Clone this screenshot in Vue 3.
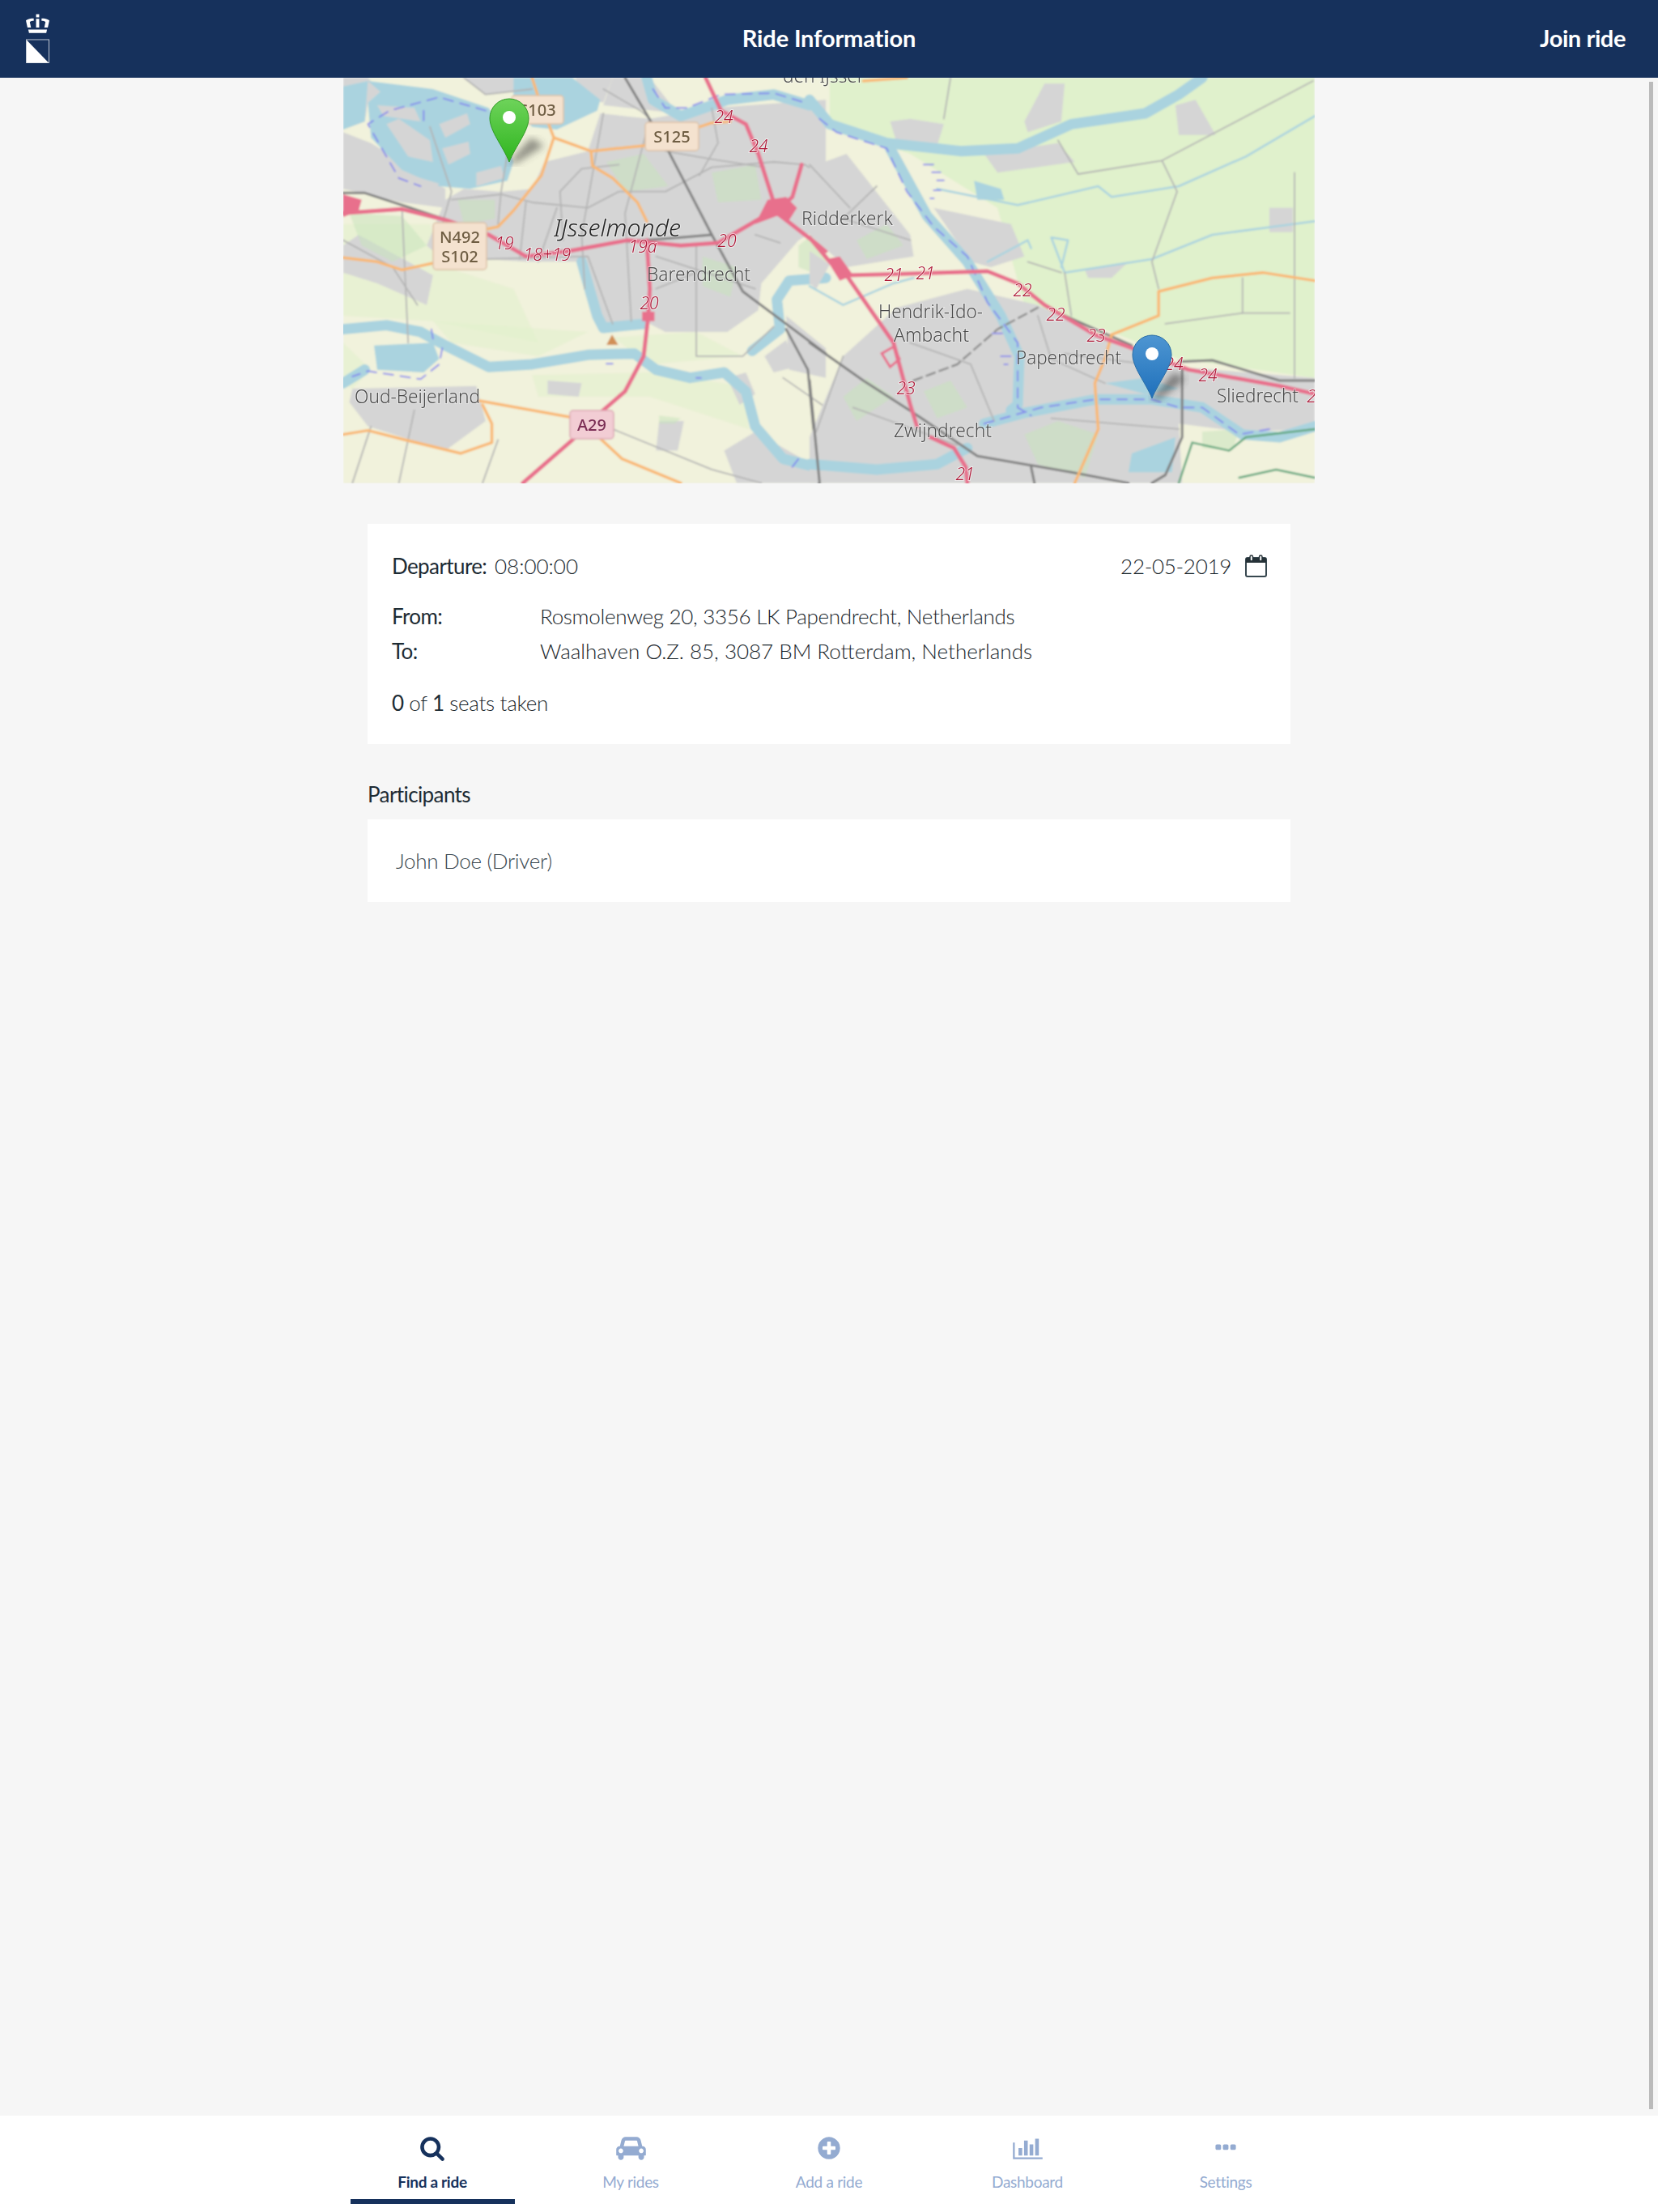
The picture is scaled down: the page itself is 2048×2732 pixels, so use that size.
<template>
  <div class="page">
    <header class="topbar">
      <svg class="logo" viewBox="0 0 30 63" aria-label="logo">
        <rect x="13" y="0" width="4" height="4" fill="#fff" />
        <path d="M13 6h4v11h-4zM0 8c3-2 6-2.500 10-2.500v3C8 8.500 6 9 5 10l1.500 7H2zM30 8c-3-2-6-2.500-10-2.500v3c2 0 4 .5 5 1.500l-1.500 7H28zM3 19.500h24l-1 4.500H4z" fill="#fff" />
        <rect x="0.500" y="32.500" width="29" height="29.500" fill="#16315c" stroke="#fff" stroke-opacity=".75" />
        <path d="M1 33l28 29H1z" fill="#fff" />
      </svg>
      <h1 class="title">Ride Information</h1>
      <a class="join">Join ride</a>
    </header>

    <main class="content">
      <svg class="map" viewBox="0 0 1200 501" xmlns="http://www.w3.org/2000/svg">
        <defs>
          <filter id="soft"><feGaussianBlur stdDeviation="0.8" /></filter>
          <filter id="softText"><feGaussianBlur stdDeviation="0.35" /></filter>
          <filter id="softer"><feGaussianBlur stdDeviation="5" /></filter>
          <linearGradient id="pinGreen" x1="0" y1="0" x2="0" y2="1">
            <stop offset="0" stop-color="#6ed35a" />
            <stop offset="1" stop-color="#2fb51f" />
          </linearGradient>
          <linearGradient id="pinBlue" x1="0" y1="0" x2="0" y2="1">
            <stop offset="0" stop-color="#4e96d2" />
            <stop offset="1" stop-color="#1f70bb" />
          </linearGradient>
        </defs>

        <g filter="url(#soft)">
          <rect width="1200" height="501" fill="#f1f2dc" />
          <g transform="translate(576,-6) scale(.4146,.3333)">
            <path class="meadow" d="M60 18H1505V1130L1100 1060 900 960 640 860 560 500 300 300 60 200z" />
          </g>
          <g transform="translate(-4,-6) scale(.3827,.3333)">
            <path v-for="(d, i) in leftGreens" :key="'lg' + i" class="meadow soft-green" :d="d" />
            <path v-for="(d, i) in leftUrban" :key="'lu' + i" class="urban" :d="d" />
            <path v-for="(d, i) in leftParks" :key="'lp' + i" class="park" :d="d" />
            <path v-for="(d, i) in leftWaterAreas" :key="'lwa' + i" class="water-area" :d="d" />
            <path v-for="(d, i) in leftPiers" :key="'lpi' + i" class="urban" :d="d" />
            <path v-for="(d, i) in leftRivers" :key="'lr' + i" class="river" :d="d" />
            <path v-for="(d, i) in leftMinor" :key="'lm' + i" class="minor" :d="d" />
            <path v-for="(d, i) in leftBoat" :key="'lb' + i" class="boat" :d="d" />
            <path v-for="(d, i) in leftRail" :key="'lra' + i" class="rail" :d="d" />
            <path v-for="(d, i) in leftTrunk" :key="'lt' + i" class="trunk" :d="d" />
            <path v-for="(d, i) in leftMotorway" :key="'lmw' + i" class="motorway" :d="d" />
            <path class="knot" d="M1380 470L1440 460 1475 500 1450 545 1410 530 1340 560z" />
            <path class="knot" d="M10 450L70 470 60 510 10 535z" />
            <path class="knot" d="M975 885H1015V920H975z" />
            <path d="M878 970L860 1008H898z" fill="#d18f56" />
          </g>
          <g transform="translate(576,-6) scale(.4146,.3333)">
            <path v-for="(d, i) in rightUrban" :key="'ru' + i" class="urban" :d="d" />
            <path v-for="(d, i) in rightParks" :key="'rp' + i" class="park" :d="d" />
            <path v-for="(d, i) in rightWaterAreas" :key="'rwa' + i" class="water-area" :d="d" />
            <path v-for="(d, i) in rightRivers" :key="'rr' + i" class="river" :d="d" />
            <path v-for="(d, i) in rightStreams" :key="'rs' + i" class="stream" :d="d" />
            <path v-for="(d, i) in rightMinor" :key="'rm' + i" class="minor" :d="d" />
            <path v-for="(d, i) in rightBoat" :key="'rb' + i" class="boat" :d="d" />
            <path v-for="(d, i) in rightForest" :key="'rf' + i" class="forest" :d="d" />
            <path v-for="(d, i) in rightRail" :key="'rra' + i" class="rail" :d="d" />
            <path class="tram" d="M310 1140L440 1080 560 950 680 870" />
            <path v-for="(d, i) in rightTrunk" :key="'rt' + i" class="trunk" :d="d" />
            <path v-for="(d, i) in rightMotorway" :key="'rmw' + i" class="motorway" :d="d" />
            <path class="knot" d="M50 690L90 680 130 750 90 770z" />
            <path class="knot-line" d="M215 1040L250 1015 268 1060 240 1090z" />
          </g>

          <g v-for="shield in shields" :key="shield.lines[0]">
            <rect :x="shield.x" :y="shield.y" :width="shield.w" :height="shield.h" rx="4" :class="shield.pink ? 'shield-pink' : 'shield'" />
          </g>
        </g>

        <g filter="url(#softText)">
          <g v-for="shield in shields" :key="'t' + shield.lines[0]">
            <text
              v-for="(line, i) in shield.lines"
              :key="line"
              :x="shield.x + shield.w / 2"
              :y="shield.y + 25 + i * 24"
              text-anchor="middle"
              :class="shield.pink ? 'shield-text-pink' : 'shield-text'"
            >{{ line }}</text>
          </g>
          <text
            v-for="label in placeLabels"
            :key="label.text"
            :x="label.x"
            :y="label.y"
            :textLength="label.w"
            lengthAdjust="spacingAndGlyphs"
            class="place"
          >{{ label.text }}</text>
          <text x="260" y="196" textLength="157" lengthAdjust="spacingAndGlyphs" class="town">IJsselmonde</text>
          <text
            v-for="(ref, i) in roadRefs"
            :key="'ref' + i"
            :x="ref.x"
            :y="ref.y"
            text-anchor="middle"
            class="road-ref"
          >{{ ref.t }}</text>
        </g>

        <path d="M205 104L232 74 248 84 213 106z" fill="#333" opacity=".5" filter="url(#softer)" />
        <path d="M999 396L1026 364 1040 372 1007 398z" fill="#333" opacity=".55" filter="url(#softer)" />
        <path d="M205 104C197 84 181 66 181 50a24 24 0 0 1 48 0C229 66 213 84 205 104z" fill="url(#pinGreen)" stroke="#2f9a24" />
        <circle cx="205" cy="49" r="8" fill="#fff" />
        <path d="M999 396C991 376 975 358 975 342a24 24 0 0 1 48 0C1023 358 1007 376 999 396z" fill="url(#pinBlue)" stroke="#2a6ea6" />
        <circle cx="999" cy="341" r="8" fill="#fff" />
      </svg>

      <section class="details">
        <div class="top-row">
          <p class="departure"><strong>Departure:</strong> <span>08:00:00</span></p>
          <p class="date">
            22-05-2019
            <svg class="calendar" viewBox="0 0 27 28">
              <rect x="1" y="4" width="25" height="23" rx="2" fill="none" stroke="#37474f" stroke-width="2" />
              <path d="M1 4h25v6H1z" fill="#263238" />
              <rect x="6" y="1" width="3.500" height="7" rx="1.700" fill="#fff" stroke="#263238" stroke-width="1.500" />
              <rect x="17.500" y="1" width="3.500" height="7" rx="1.700" fill="#fff" stroke="#263238" stroke-width="1.500" />
            </svg>
          </p>
        </div>
        <div class="route">
          <strong>From:</strong><span>Rosmolenweg 20, 3356 LK Papendrecht, Netherlands</span>
          <strong>To:</strong><span class="to-value">Waalhaven O.Z. 85, 3087 BM Rotterdam, Netherlands</span>
        </div>
        <p class="seats"><strong>0</strong> of <strong>1</strong> seats taken</p>
      </section>

      <h2 class="participants-title">Participants</h2>
      <section class="participants">John Doe (Driver)</section>
    </main>

    <nav class="tabs">
      <a v-for="tab in tabs" :key="tab.label" class="tab" :class="{ active: tab.active }">
        <svg class="tab-icon" :style="{ width: tab.size + 'px' }" :viewBox="tab.box"><path :d="tab.icon" /></svg>
        <span>{{ tab.label }}</span>
      </a>
    </nav>

    <div class="scrollbar"></div>
  </div>
</template>

<script setup>
const tabs = [
  {
    label: "Find a ride",
    active: true,
    size: 32,
    box: "0 0 1792 1792",
    icon: "M1216 832q0-185-131.500-316.500t-316.500-131.500-316.500 131.500-131.500 316.500 131.500 316.500 316.500 131.500 316.500-131.500 131.500-316.500zm512 832q0 52-38 90t-90 38q-54 0-90-38l-343-342q-179 124-399 124-143 0-273.500-55.500t-225-150-150-225-55.500-273.500 55.500-273.500 150-225 225-150 273.500-55.500 273.500 55.500 225 150 150 225 55.500 273.500q0 220-124 399l343 343q37 37 37 90z",
  },
  {
    label: "My rides",
    size: 37,
    box: "0 0 2048 1792",
    icon: "M480 1088q0-66-47-113t-113-47-113 47-47 113 47 113 113 47 113-47 47-113zm36-320h1016l-89-357q-2-8-14-17.500t-21-9.500h-768q-9 0-21 9.500t-14 17.500zm1372 320q0-66-47-113t-113-47-113 47-47 113 47 113 113 47 113-47 47-113zm160-96v384q0 14-9 23t-23 9h-96v128q0 80-56 136t-136 56-136-56-56-136v-128h-1024v128q0 80-56 136t-136 56-136-56-56-136v-128h-96q-14 0-23-9t-9-23v-384q0-93 65.500-158.500t158.500-65.500h28l105-419q23-94 104-157.500t179-63.500h768q98 0 179 63.500t104 157.500l105 419h28q93 0 158.500 65.500t65.500 158.500z",
  },
  {
    label: "Add a ride",
    size: 32,
    box: "0 0 1792 1792",
    icon: "M1344 960v-128q0-26-19-45t-45-19h-256v-256q0-26-19-45t-45-19h-128q-26 0-45 19t-19 45v256h-256q-26 0-45 19t-19 45v128q0 26 19 45t45 19h256v256q0 26 19 45t45 19h128q26 0 45-19t19-45v-256h256q26 0 45-19t19-45zm320-64q0 209-103 385.500t-279.500 279.500-385.500 103-385.500-103-279.500-279.500-103-385.500 103-385.500 279.500-279.500 385.500-103 385.500 103 279.500 279.500 103 385.500z",
  },
  {
    label: "Dashboard",
    size: 37,
    box: "0 0 2048 1792",
    icon: "M640 896v512h-256v-512h256zm384-512v1024h-256v-1024h256zm1024 1152v128h-2048v-1152h128v1024h1920zm-640-896v768h-256v-768h256zm384-384v1152h-256v-1152h256z",
  },
  {
    label: "Settings",
    size: 32,
    box: "0 0 1792 1792",
    icon: "M576 736v192q0 40-28 68t-68 28h-192q-40 0-68-28t-28-68v-192q0-40 28-68t68-28h192q40 0 68 28t28 68zm512 0v192q0 40-28 68t-68 28h-192q-40 0-68-28t-28-68v-192q0-40 28-68t68-28h192q40 0 68 28t28 68zm512 0v192q0 40-28 68t-68 28h-192q-40 0-68-28t-28-68v-192q0-40 28-68t68-28h192q40 0 68 28t28 68z",
  },
];

// map features, written in the coordinates of the two halves of the map
const leftGreens = [
  "M10 560H290L340 720 560 800 640 1000 300 920 10 900z",
  "M300 920L800 960 640 1050 360 1000z",
  "M880 980L1150 960 1300 1050 1000 1080z",
  "M620 1120L1000 1110 1300 1160 1320 1320 1000 1200 640 1200z",
  "M10 1000L100 1100 40 1170 10 1150z",
];
const leftUrban = [
  "M340 470L400 430 520 440 620 430 660 330 800 290 840 150 1000 170 1200 130 1568 100V560L1480 620 1360 780 1350 880 1250 960 1050 960 1000 930 830 930 780 700 600 700 470 690 340 700 280 640z",
  "M10 18H90L130 70 90 110 80 180 10 210z",
  "M10 220L100 260 340 430 340 500 200 480 10 430z",
  "M10 640L60 600 300 750 280 860 120 780 10 740z",
  "M40 1170L440 1160 470 1290 340 1400 90 1310 30 1220z",
  "M1240 1400L1340 1330 1568 1480V1520H1280z",
  "M1030 1290L1110 1290 1090 1400 1020 1400z",
  "M670 1140L780 1150 770 1200 670 1190z",
  "M400 18H600L560 70 470 80z",
  "M880 18H1000L1090 150 850 120z",
  "M1250 1130L1310 1110 1340 1190 1290 1230z",
  "M1440 900L1568 1020V1130L1450 1100z",
  "M1370 1050L1440 990 1470 1090 1400 1110z",
  "M760 18H880L850 110 780 90z",
];
const leftParks = [
  "M1200 370L1340 340 1360 470 1220 480z",
  "M860 330L980 300 1060 420 920 440z",
  "M30 520L200 530 280 640 170 700 70 640z",
  "M1170 680L1280 720 1260 830 1170 790z",
  "M380 470L500 470 500 540 400 560z",
  "M1480 640L1568 560V760L1480 720z",
  "M1030 1270L1100 1280 1080 1300 1030 1300z",
];
const leftWaterAreas = [
  "M90 30L300 60 480 130 520 200 560 330 540 400 420 430 320 420 200 360 100 240 90 110 130 70z",
  "M10 50L90 30 80 180 10 210z",
  "M560 18H750L840 100 830 140 700 210 620 200 560 120z",
  "M110 1010L300 1000 320 1060 270 1110 120 1100z",
];
const leftPiers = [
  "M150 190L190 170 290 250 300 330 220 310z",
  "M320 190L410 150 420 190 340 240z",
  "M330 280L415 255 420 300 350 340z",
  "M200 370L320 410 310 425 200 395z",
  "M440 370L520 345 530 390 440 420z",
  "M40 400L160 385 300 420 200 440z",
  "M120 120L240 130 260 180 140 160z",
];
const leftRivers = [
  "M10 950L150 935 260 960 340 1010 480 1090 620 1080 800 1045 950 1040 1020 1100 1130 1130 1240 1110 1310 1180 1340 1310 1430 1430 1568 1470",
  "M990 18L1010 100 1100 160 1250 100 1400 80 1515 120",
  "M780 700L830 900 850 945 980 930",
  "M1568 760L1450 770 1410 840 1420 950 1330 1030",
  "M10 1150L80 1100",
];
const leftMinor = [
  "M360 470L520 450 620 480 800 500 900 440 1050 440 1200 350 1400 330 1500 340",
  "M720 620L710 440 780 355 900 340",
  "M1050 290L1200 320 1370 350",
  "M850 150L780 600 790 800",
  "M470 690L800 680 880 930",
  "M1150 640L1150 1050 1300 1050 1400 940",
  "M200 500L220 1000",
  "M540 300L520 440 510 560",
  "M290 200L360 440 330 560",
  "M880 1320L1200 1470 1360 1520",
  "M240 1250L190 1520",
  "M460 1520L510 1360",
  "M1000 170L920 520 940 920",
  "M1200 130L1220 260 1160 380",
  "M1500 340L1568 390",
  "M1020 680L1340 800M1020 800L1150 740",
  "M600 480L580 690M700 500L640 700",
  "M10 620L170 720 250 860",
  "M100 1310L40 1520M1430 1130L1568 1240",
  "M400 18L470 80 620 60M850 60L970 140 1000 170",
  "M1420 630L1340 600",
];
const leftBoat = [
  "M470 140L320 90 160 140 90 190 130 270 190 390 260 420",
  "M270 140V180M295 950L300 985M330 1020L320 1080 260 1135 90 1105 40 1125",
  "M1010 60L1050 130 1120 130 1230 80 1400 75 1500 110",
  "M860 1078H880M1150 1130H1165M1460 1460L1480 1430",
];
const leftRail = [
  "M920 18L1060 290 1200 600 1300 810 1568 1040",
  "M10 445L80 445 360 550",
  "M1440 950L1510 1100 1545 1520",
  "M930 625L1100 610 1200 600",
];
const leftTrunk = [
  "M620 18L640 90 690 240 810 290 980 270 1200 185 1260 180",
  "M690 240L650 380 560 510 510 570 470 580",
  "M810 290L815 345 880 390 960 480 990 550",
  "M10 685L120 700 200 730 300 705",
  "M450 1215L740 1275",
  "M460 1230L490 1300 490 1370 390 1410 210 1360 90 1325 10 1340",
  "M840 1355L910 1430 1100 1520",
];
const leftMotorway = [
  "M10 520L200 505 340 545 480 600 600 680 740 660 930 620 1100 640 1220 630 1400 510 1568 660",
  "M1180 18L1230 140 1310 190 1350 300 1400 480",
  "M1490 340L1460 460 1410 510",
  "M990 620L1000 800 995 900 980 1050 920 1180 840 1260 750 1360 590 1520",
];
const rightUrban = [
  "M0 350L110 300 300 600 310 680 110 720 0 600z",
  "M370 500L600 560 640 680 540 720 480 700z",
  "M640 180L700 40H760L750 180 650 220z",
  "M520 300L740 260 790 330 560 370z",
  "M100 1050L260 870 470 800 680 860 920 1010 1100 1090 1505 1130V1320L1290 1330 1100 1300 1110 1520H0V1350z",
  "M1370 500H1440V590H1370z",
  "M820 730L950 700 900 760 830 760z",
  "M1090 120L1150 100 1210 230 1100 230z",
  "M240 180L300 170 400 190 380 270 260 260z",
  "M0 660L60 710 20 800 0 780z",
];
const rightParks = [
  "M100 1200L170 1130 250 1200 140 1290z",
  "M640 1340L740 1290 860 1340 820 1500 680 1450z",
  "M1170 1330L1280 1320 1260 1400 1170 1390z",
  "M140 620L230 560 280 640 170 690z",
  "M340 1180L420 1140 470 1240 380 1280z",
];
const rightWaterAreas = [
  "M960 1410L1090 1350 1080 1480 950 1480z",
  "M490 400L570 430 580 470 500 470z",
  "M880 1150L1000 1130 1100 1170 1000 1190z",
];
const rightRivers = [
  "M0 100L60 190 230 260 450 290 620 280 780 190 1000 150 1100 80 1170 18",
  "M240 280L350 530 470 700 570 900 625 1050 620 1230 600 1250",
  "M520 1300L640 1260 850 1210 1020 1210 1170 1240 1290 1340 1400 1350 1505 1310",
  "M0 1450L200 1470 380 1450 470 1390",
];
const rightStreams = [
  "M380 430L620 490 860 420 900 460 1100 420 1300 310 1505 160",
  "M530 700L620 640 650 620 660 650M760 740L720 610 770 620 750 720",
  "M0 790L100 860 250 780 310 760",
  "M760 740L1020 690 1200 600 1505 550",
];
const rightMinor = [
  "M800 375L1050 325 1500 30",
  "M1050 325L1095 440 1020 700 1040 800",
  "M1445 370V1130",
  "M760 740L780 900",
  "M650 700L750 740",
  "M1060 930L1290 890 1430 890",
  "M800 375L740 250",
  "M680 900L720 1060 880 1150",
  "M0 340L120 500",
  "M100 1050L20 1330",
  "M720 1280L1100 1320",
  "M420 18L400 170",
  "M1290 760V890M760 1040L1000 1080",
  "M300 1000L480 1080 550 1290M130 1240L440 1380",
  "M200 420L100 540 300 620",
];
const rightBoat = [
  "M30 170L80 220 230 280 290 440 370 570 470 680 530 850 620 1000 620 1240 660 1270M520 1300L690 1240 850 1210 1020 1210 1100 1240 1170 1240 1280 1340 1370 1320",
  "M340 340H370M365 368H390M380 398H400M370 435H390M360 465H370",
  "M545 965H590M570 1050H600M580 1080H590",
];
const rightForest = [
  "M1100 1520L1140 1370 1250 1400 1300 1350 1505 1320",
  "M1280 1500L1390 1470 1505 1500",
];
const rightRail = [
  "M0 1000L160 1140 310 1260 500 1420 780 1480 950 1520",
  "M1100 1070L1200 1065 1400 1140H1505",
  "M1110 1100V1350L1060 1490 1020 1520",
  "M760 900L960 1010",
  "M660 1460L670 1520M0 1140L30 1520",
];
const rightTrunk = [
  "M900 970L1040 900 1040 810 1200 760 1350 740 1505 770",
  "M900 970L880 1060 850 1150 860 1320 790 1520",
  "M160 30L290 18",
];
const rightMotorway = [
  "M0 610L60 700 110 750 250 1000 300 1230 320 1310",
  "M110 750L280 745 530 735 620 780 700 860 850 970 960 1020 1130 1100 1400 1160 1505 1190",
  "M360 1350L430 1390 465 1460 470 1520",
];

const shields = [
  { x: 208, y: 22, w: 64, h: 35, lines: ["S103"] },
  { x: 373, y: 55, w: 66, h: 35, lines: ["S125"] },
  { x: 111, y: 179, w: 66, h: 58, lines: ["N492", "S102"] },
  { x: 280, y: 411, w: 54, h: 35, lines: ["A29"], pink: true },
];

const placeLabels = [
  { text: "den IJssel", x: 543, y: 6, w: 97 },
  { text: "Barendrecht", x: 375, y: 251, w: 128 },
  { text: "Oud-Beijerland", x: 14, y: 402, w: 155 },
  { text: "Ridderkerk", x: 566, y: 182, w: 113 },
  { text: "Hendrik-Ido-", x: 661, y: 297, w: 129 },
  { text: "Ambacht", x: 680, y: 326, w: 93 },
  { text: "Papendrecht", x: 831, y: 354, w: 130 },
  { text: "Sliedrecht", x: 1079, y: 401, w: 101 },
  { text: "Zwijndrecht", x: 680, y: 444, w: 121 },
];

const roadRefs = [
  { t: "24", x: 470, y: 56 },
  { t: "24", x: 513, y: 92 },
  { t: "19", x: 199, y: 212 },
  { t: "18+19", x: 252, y: 226 },
  { t: "19a", x: 370, y: 216 },
  { t: "20", x: 474, y: 209 },
  { t: "20", x: 378, y: 286 },
  { t: "21", x: 680, y: 251 },
  { t: "21", x: 719, y: 249 },
  { t: "22", x: 839, y: 270 },
  { t: "22", x: 880, y: 300 },
  { t: "23", x: 930, y: 326 },
  { t: "24", x: 1026, y: 361 },
  { t: "24", x: 1068, y: 375 },
  { t: "23", x: 695, y: 391 },
  { t: "21", x: 768, y: 497 },
  { t: "2", x: 1196, y: 401 },
];
</script>

<style scoped>
.page {
  position: relative;
  display: flex;
  flex-direction: column;
  height: 100vh;
  background: #f6f6f6;
  color: #18242a;
  font-family: Lato, "Liberation Sans", sans-serif;
  font-weight: 300;
  font-size: 26px;
  letter-spacing: -.3px;
  overflow: hidden;
}

.topbar {
  display: grid;
  grid-template-columns: 1fr auto 1fr;
  align-items: center;
  height: 96px;
  padding: 0 40px;
  box-sizing: border-box;
  background: #16315c;
  color: #fff;
}

.logo {
  width: 29px;
  height: 62px;
  margin-left: -8px;
}

.title {
  margin: 0 0 3px;
  font-size: 29px;
  font-weight: 700;
  letter-spacing: -.15px;
}

.join {
  justify-self: end;
  margin-bottom: 3px;
  font-size: 29px;
  font-weight: 700;
  letter-spacing: -.4px;
}

.content {
  flex: 1;
  display: flex;
  flex-direction: column;
  align-items: center;
}

.map {
  display: block;
  width: 1200px;
  height: 501px;
  flex-shrink: 0;
}

.urban {
  fill: #d5d5d5;
}

.meadow {
  fill: #e0f1cc;
}

.soft-green {
  opacity: .55;
}

.park {
  fill: #c9e3bd;
  opacity: .55;
}

.water-area {
  fill: #aad3df;
}

.river,
.stream,
.minor,
.boat,
.forest,
.rail,
.tram,
.trunk,
.motorway {
  fill: none;
  stroke-linejoin: round;
  stroke-linecap: round;
  vector-effect: non-scaling-stroke;
}

.river {
  stroke: #aad3df;
  stroke-width: 13px;
}

.stream {
  stroke: #aad3df;
  stroke-width: 2.500px;
}

.minor {
  stroke: #b3b3b3;
  stroke-width: 1.800px;
}

.boat {
  stroke: #7b7bef;
  stroke-width: 2px;
  stroke-dasharray: 12 9;
  opacity: .8;
}

.forest {
  stroke: #5fa67c;
  stroke-width: 2.500px;
}

.rail {
  stroke: #808080;
  stroke-width: 3px;
}

.tram {
  stroke: #8c8c8c;
  stroke-width: 2.500px;
  stroke-dasharray: 11 6;
}

.trunk {
  stroke: #f9b874;
  stroke-width: 3.500px;
}

.motorway {
  stroke: #e8708c;
  stroke-width: 5px;
}

.knot {
  fill: #e8708c;
}

.knot-line {
  fill: none;
  stroke: #e8708c;
  stroke-width: 3px;
  vector-effect: non-scaling-stroke;
}

.shield {
  fill: #f4e2cf;
  stroke: #dcc0a5;
  stroke-width: 1.500px;
}

.shield-pink {
  fill: #f2cdd4;
  stroke: #dba8b3;
  stroke-width: 1.500px;
}

.shield-text,
.shield-text-pink {
  font-family: "Noto Sans", sans-serif;
  font-size: 20px;
  font-weight: 500;
  letter-spacing: 0;
}

.shield-text {
  fill: #6e5d43;
}

.shield-text-pink {
  fill: #7b2f55;
}

.place,
.town {
  font-family: "Noto Sans", sans-serif;
  font-size: 24px;
  letter-spacing: 0;
  fill: #4a4a4a;
  paint-order: stroke;
  stroke: rgba(255, 255, 255, .4);
  stroke-width: 2px;
}

.town {
  font-style: italic;
  font-size: 29px;
  fill: #262626;
}

.road-ref {
  font-family: "Noto Sans", sans-serif;
  font-style: italic;
  font-size: 21px;
  letter-spacing: 0;
  fill: #ae1636;
  paint-order: stroke;
  stroke: rgba(255, 255, 255, .55);
  stroke-width: 2px;
}

.details {
  width: 1140px;
  margin-top: 50px;
  padding: 32px 30px 29px;
  box-sizing: border-box;
  background: #fff;
}

.details p {
  margin: 0;
}

.details strong,
.participants-title {
  font-weight: 400;
  letter-spacing: -.6px;
  color: #1d2b33;
}

.top-row {
  display: flex;
  justify-content: space-between;
  align-items: center;
  height: 40px;
}

.departure span {
  margin-left: 3px;
  letter-spacing: 0;
}

.date {
  display: flex;
  align-items: center;
  gap: 17px;
}

.calendar {
  width: 27px;
  height: 28px;
  margin-right: -1px;
}

.route {
  display: grid;
  grid-template-columns: 183px 1fr;
  grid-auto-rows: 43px;
  align-items: center;
  margin-top: 20px;
}

.to-value {
  letter-spacing: 0;
}

.details .seats {
  margin-top: 22px;
  line-height: 43px;
}

.participants-title {
  width: 1140px;
  margin: 45px 0 14px;
  font-size: 26px;
  line-height: 34px;
}

.participants {
  display: flex;
  align-items: center;
  width: 1140px;
  height: 102px;
  padding-left: 35px;
  box-sizing: border-box;
  background: #fff;
  color: #36444c;
}

.tabs {
  display: grid;
  grid-template-columns: repeat(5, 245px);
  justify-content: center;
  height: 119px;
  background: #fff;
}

.tab {
  display: flex;
  flex-direction: column;
  align-items: center;
  margin: 0 21px;
  padding-top: 24px;
  height: 109px;
  box-sizing: border-box;
  color: #94abd1;
  font-size: 19px;
  font-weight: 400;
}

.tab.active {
  color: #16315c;
  font-weight: 700;
  border-bottom: 6px solid #16315c;
}

.tab-icon {
  height: 32px;
  margin-bottom: 14px;
  fill: currentColor;
}

.scrollbar {
  position: absolute;
  top: 101px;
  right: 6px;
  width: 5px;
  height: 2504px;
  background: #bbb;
}
</style>

<style>
html,
body {
  margin: 0;
}
</style>
